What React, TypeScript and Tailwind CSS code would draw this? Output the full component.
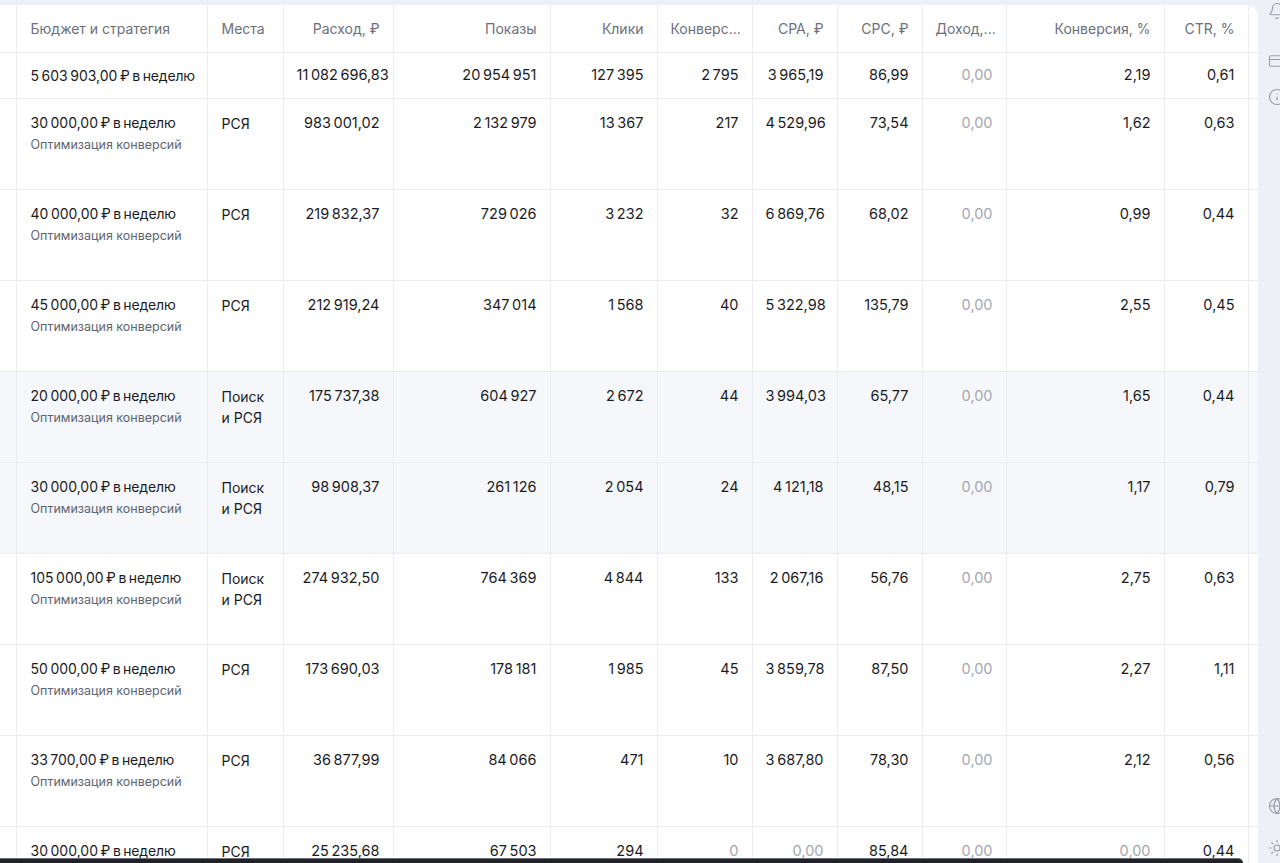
import React from "react";
import { Bell, CreditCard, Info, Globe, Sun } from "lucide-react";

const S = "\u202F";
const n = (s: string) => s.replace(/ /g, S);

type Row = {
  budget: string;
  place: string[];
  vals: string[];
  gray: boolean[];
  hl?: boolean;
};

const G = [false, false, false, false, false, false, true, false, false];

const rows: Row[] = [
  { budget: "30 000,00", place: ["РСЯ"], vals: ["983 001,02", "2 132 979", "13 367", "217", "4 529,96", "73,54", "0,00", "1,62", "0,63"], gray: G },
  { budget: "40 000,00", place: ["РСЯ"], vals: ["219 832,37", "729 026", "3 232", "32", "6 869,76", "68,02", "0,00", "0,99", "0,44"], gray: G },
  { budget: "45 000,00", place: ["РСЯ"], vals: ["212 919,24", "347 014", "1 568", "40", "5 322,98", "135,79", "0,00", "2,55", "0,45"], gray: G },
  { budget: "20 000,00", place: ["Поиск", "и РСЯ"], vals: ["175 737,38", "604 927", "2 672", "44", "3 994,03", "65,77", "0,00", "1,65", "0,44"], gray: G, hl: true },
  { budget: "30 000,00", place: ["Поиск", "и РСЯ"], vals: ["98 908,37", "261 126", "2 054", "24", "4 121,18", "48,15", "0,00", "1,17", "0,79"], gray: G, hl: true },
  { budget: "105 000,00", place: ["Поиск", "и РСЯ"], vals: ["274 932,50", "764 369", "4 844", "133", "2 067,16", "56,76", "0,00", "2,75", "0,63"], gray: G },
  { budget: "50 000,00", place: ["РСЯ"], vals: ["173 690,03", "178 181", "1 985", "45", "3 859,78", "87,50", "0,00", "2,27", "1,11"], gray: G },
  { budget: "33 700,00", place: ["РСЯ"], vals: ["36 877,99", "84 066", "471", "10", "3 687,80", "78,30", "0,00", "2,12", "0,56"], gray: G },
  { budget: "30 000,00", place: ["РСЯ"], vals: ["25 235,68", "67 503", "294", "0", "0,00", "85,84", "0,00", "0,00", "0,44"], gray: [false, false, false, true, true, false, true, true, false] },
];

const widths = [16, 191, 76, 110, 157, 107, 95, 85, 85, 84, 158, 84, 10];
const headers = ["Расход, ₽", "Показы", "Клики", "Конверс...", "CPA, ₽", "CPC, ₽", "Доход,...", "Конверсия, %", "CTR, %"];

const bd = "border-r border-b border-[#ebecf0]";
const top = `${bd} align-top`;
const mid = `${bd} align-middle`;

export default function App() {
  return (
    <div
      className="relative flex h-[863px] w-[1280px] overflow-hidden bg-[#eef0f7] text-[#1b1c1f]"
      style={{ fontFamily: "Inter, 'Noto Sans', sans-serif" }}
    >
      <div className="flex w-[1258px] shrink-0 flex-col pt-[5px]">
        <div className="flex-1 overflow-hidden rounded-tr-[12px] bg-white">
          <table className="table-fixed border-collapse" style={{ width: 1258 }}>
            <colgroup>
              {widths.map((w, i) => (
                <col key={i} style={{ width: w }} />
              ))}
            </colgroup>
            <thead>
              <tr className="h-[47px] text-[14px] text-[#6c707b]">
                <th className={mid}></th>
                <th className={`${mid} px-[14px] text-left font-normal`}>Бюджет и стратегия</th>
                <th className={`${mid} px-[14px] text-left font-normal`}>Места</th>
                {headers.map((h, i) => (
                  <th key={i} className={`${mid} whitespace-nowrap px-[13px] text-right font-normal`}>
                    {h}
                  </th>
                ))}
                <th className={`${mid} border-r-0`}></th>
              </tr>
            </thead>
            <tbody className="text-[14.5px]">
              <tr className="h-[46px]">
                <td className={mid}></td>
                <td className={`${mid} whitespace-nowrap px-[14px] text-[14px] tracking-[-0.15px]`}>
                  {n("5 603 903,00 ₽ в неделю")}
                </td>
                <td className={mid}></td>
                {["11 082 696,83", "20 954 951", "127 395", "2 795", "3 965,19", "86,99", "0,00", "2,19", "0,61"].map((v, i) => (
                  <td
                    key={i}
                    className={`${mid} whitespace-nowrap px-[13px] text-right ${i === 6 ? "text-[#a4a7b0]" : ""}`}
                  >
                    {n(v)}
                  </td>
                ))}
                <td className={`${mid} border-r-0`}></td>
              </tr>
              {rows.map((r, ri) => (
                <tr key={ri} className={`h-[91px] ${r.hl ? "bg-[#f6f7fa]" : ""}`}>
                  <td className={top}></td>
                  <td className={`${top} px-[14px] pt-[14px]`}>
                    <div className="whitespace-nowrap text-[14px] leading-[20px] tracking-[-0.15px]">
                      {n(r.budget + " ₽ в неделю")}
                    </div>
                    {ri < 8 && (
                      <div className="mt-[3px] whitespace-nowrap text-[12.5px] leading-[18px] text-[#5f6470]">
                        Оптимизация конверсий
                      </div>
                    )}
                  </td>
                  <td className={`${top} px-[14px] pt-[14px] text-[14px] leading-[21px]`}>
                    {r.place.map((p, i) => (
                      <div key={i} className="whitespace-nowrap">
                        {p}
                      </div>
                    ))}
                  </td>
                  {r.vals.map((v, i) => (
                    <td
                      key={i}
                      className={`${top} whitespace-nowrap px-[13px] pt-[14px] text-right leading-[20px] ${r.gray[i] ? "text-[#a4a7b0]" : ""}`}
                    >
                      {n(v)}
                    </td>
                  ))}
                  <td className={`${top} border-r-0`}></td>
                </tr>
              ))}
            </tbody>
          </table>
        </div>
      </div>
      <div className="relative flex-1">
        <div className="absolute left-[10px] top-[2px] text-[#9a9eac]">
          <Bell size={18} strokeWidth={1.6} />
        </div>
        <div className="absolute left-[10px] top-[52px] text-[#9a9eac]">
          <CreditCard size={18} strokeWidth={1.6} />
        </div>
        <div className="absolute left-[10px] top-[88px] text-[#9a9eac]">
          <Info size={18} strokeWidth={1.6} />
        </div>
        <div className="absolute left-[10px] top-[797px] text-[#9a9eac]">
          <Globe size={18} strokeWidth={1.6} />
        </div>
        <div className="absolute left-[10px] top-[839px] text-[#9a9eac]">
          <Sun size={18} strokeWidth={1.6} />
        </div>
      </div>
      <div className="absolute bottom-0 left-0 h-[5px] w-[1243px] rounded-tr-[6px] border-t border-[#6b7280] bg-[#1f2126]" />
    </div>
  );
}
